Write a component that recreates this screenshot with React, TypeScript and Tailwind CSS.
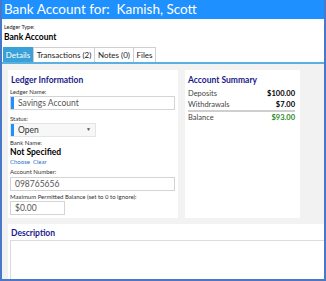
import React from "react";

const font = { fontFamily: 'Lato, "Noto Sans", sans-serif' };

function Input({ value, bar, w }: { value: string; bar?: boolean; w: string }) {
  return (
    <div className={`flex h-[14px] items-stretch border border-[#d4d4d4] bg-white ${w}`}>
      {bar && <div className="w-[3px] bg-[#1e90ff]" />}
      <div className="flex items-center pl-[4px] text-[8.5px] leading-none text-[#555]">{value}</div>
    </div>
  );
}

export default function App() {
  return (
    <div
      className="flex h-[281px] w-[326px] flex-col overflow-hidden border-2 border-t-0 border-[#4a78c8] bg-white"
      style={font}
    >
      <div className="flex h-[19px] shrink-0 items-center bg-[#1e90ff] pl-[2px] text-[13.5px] leading-none text-white whitespace-pre">
        Bank Account for:  Kamish, Scott
      </div>
      <div className="flex h-[28px] shrink-0 flex-col pl-[2px] pt-[4px]">
        <div className="text-[5.5px] leading-[8px] text-[#222]">Ledger Type:</div>
        <div className="text-[8.5px] font-bold leading-[13px] text-black">Bank Account</div>
      </div>
      <div className="flex h-[17px] shrink-0 items-stretch border-b-2 border-[#5ab0e0] pl-[1px] text-[8px] leading-none">
        <div className="flex w-[30px] items-center justify-center bg-[#3aa0d8] text-white">Details</div>
        <div className="flex w-[62px] items-center justify-center border border-b-0 border-[#cfcfcf] text-[#222]">Transactions (2)</div>
        <div className="flex w-[39px] items-center justify-center border border-b-0 border-l-0 border-[#cfcfcf] text-[#222]">Notes (0)</div>
        <div className="flex w-[22px] items-center justify-center border border-b-0 border-l-0 border-[#cfcfcf] text-[#222]">Files</div>
      </div>
      <div className="flex flex-1 flex-col gap-[6px] bg-[#f2f2f2] pl-[6px] pt-[6px]">
        <div className="flex h-[148px] shrink-0 gap-[7px]">
          <div className="flex w-[170px] flex-col bg-white pl-[2px] pr-[3px] pt-[4px]">
            <div className="pl-[1px] text-[8.5px] font-bold leading-[12px] text-[#1a1a8a]">Ledger Information</div>
            <div className="mt-[1px] text-[6px] leading-[9px] text-[#333]">Ledger Name:</div>
            <Input value="Savings Account" bar w="w-full" />
            <div className="mt-[4px] text-[6px] leading-[9px] text-[#333]">Status:</div>
            <div className="flex h-[14px] w-[86px] items-stretch border border-[#e4e4e4] bg-[#f7f7f7]">
              <div className="w-[3px] bg-[#1e90ff]" />
              <div className="flex flex-1 items-center pl-[4px] text-[8.5px] leading-none text-[#333]">Open</div>
              <div className="flex items-center pr-[4px] text-[5px] text-[#555]">▼</div>
            </div>
            <div className="mt-[1px] text-[6px] leading-[9px] text-[#333]">Bank Name:</div>
            <div className="text-[8.5px] font-bold leading-[10px] text-black">Not Specified</div>
            <div className="flex gap-[3px] text-[6px] leading-[10px] text-[#2a6fc9]">
              <span>Choose</span>
              <span>Clear</span>
            </div>
            <div className="text-[6px] leading-[10px] text-[#333]">Account Number:</div>
            <Input value="098765656" w="w-full" />
            <div className="mt-[1px] text-[6px] leading-[9px] text-[#333]">Maximum Permitted Balance (set to 0 to ignore):</div>
            <Input value="$0.00" w="w-[55px]" />
          </div>
          <div className="flex w-[115px] flex-col bg-white px-[3px] pt-[4px]">
            <div className="text-[8.5px] font-bold leading-[12px] text-[#1a1a8a]">Account Summary</div>
            <div className="mt-[2px] flex flex-col pr-[2px] text-[7.5px] leading-[11px]">
              <div className="flex justify-between">
                <span className="text-[#444]">Deposits</span>
                <span className="font-bold text-black">$100.00</span>
              </div>
              <div className="flex justify-between border-b-2 border-[#cfcfcf]">
                <span className="text-[#444]">Withdrawals</span>
                <span className="font-bold text-black">$7.00</span>
              </div>
              <div className="flex justify-between">
                <span className="text-[#444]">Balance</span>
                <span className="font-bold text-[#2a8a2a]">$93.00</span>
              </div>
            </div>
          </div>
        </div>
        <div className="flex flex-1 flex-col bg-white pl-[2px] pt-[3px]">
          <div className="pl-[1px] text-[8.5px] font-bold leading-[12px] text-[#1a1a8a]">Description</div>
          <div className="mt-[1px] flex-1 border border-r-0 border-b-0 border-[#dcdcdc]" />
        </div>
      </div>
    </div>
  );
}
